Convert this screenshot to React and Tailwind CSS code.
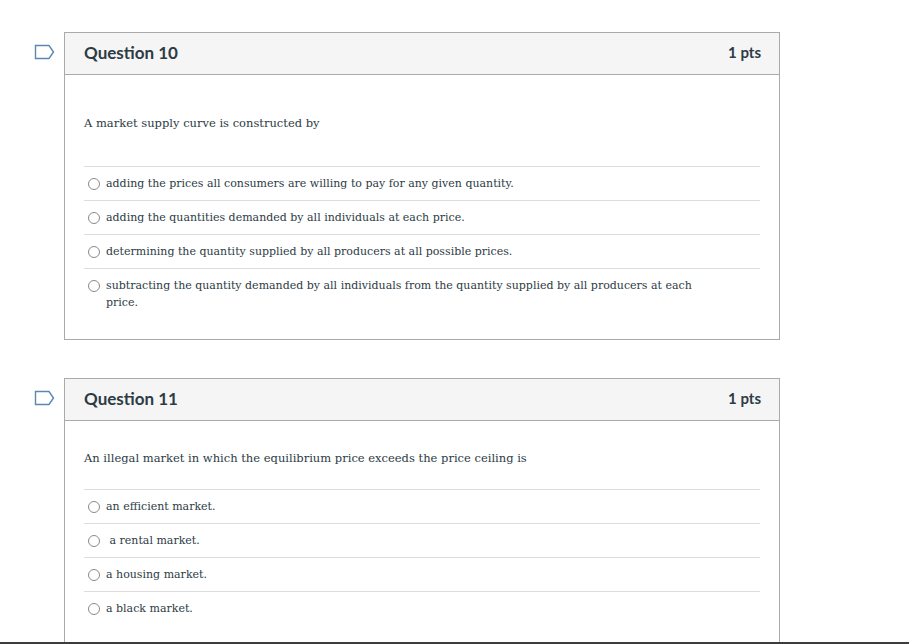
const questions = [
  {
    id: 10,
    points: '1 pts',
    text: 'A market supply curve is constructed by',
    top: 'pt-[39px]',
    gap: 'pb-[34px]',
    answers: [
      'adding the prices all consumers are willing to pay for any given quantity.',
      'adding the quantities demanded by all individuals at each price.',
      'determining the quantity supplied by all producers at all possible prices.',
      'subtracting the quantity demanded by all individuals from the quantity supplied by all producers at each price.',
    ],
  },
  {
    id: 11,
    points: '1 pts',
    text: 'An illegal market in which the equilibrium price exceeds the price ceiling is',
    top: 'pt-[28px]',
    gap: 'pb-[22px]',
    answers: ['an efficient market.', '\u00a0a rental market.', 'a housing market.', 'a black market.'],
  },
];

function Flag() {
  return (
    <svg width="22" height="16" viewBox="0 0 22 16" className="mt-[12px] shrink-0">
      <path d="M1.5 1.5 H15 L19.5 8 L15 14.5 H1.5 Z" fill="none" stroke="#5b88b0" strokeWidth="1.4" />
    </svg>
  );
}

function Question({ q }) {
  return (
    <div className="flex items-start gap-[4px]">
      <div className="w-[60px] flex justify-end pr-[4px]">
        <Flag />
      </div>
      <div className="w-[716px] border border-[#aaaaaa] bg-white">
        <div className="h-[42px] flex items-center justify-between pl-[19px] pr-[18px] bg-[#f5f5f5] border-b border-[#aaaaaa] text-[#2d3b45] font-bold text-[17px] font-['Lato',sans-serif]">
          <span className="-mt-[2px]">Question {q.id}</span>
          <span className="-mt-[2px] text-[15px]">{q.points}</span>
        </div>
        <div className={`px-[19px] pb-[21px] text-[#2d3b45] font-['DejaVu_Serif',serif] ${q.top}`}>
          <p className={`text-[11.5px] leading-[18px] ${q.gap}`}>{q.text}</p>
          <div>
            {q.answers.map((a, i) => (
              <div key={i} className="flex items-start border-t border-[#dddddd] pt-[8px] pb-[7px] min-h-[34px]">
                <span className="mt-[3px] ml-[4px] mr-[6px] w-[12px] h-[12px] shrink-0 rounded-full border border-[#8a8a8a] bg-white" />
                <span className="text-[11px] leading-[17px] pr-[40px]">{a}</span>
              </div>
            ))}
          </div>
        </div>
      </div>
    </div>
  );
}

export default function App() {
  return (
    <div className="h-[644px] overflow-hidden bg-white border-b-2 border-[#3c3c3c]">
      <div className="pt-[32px] flex flex-col gap-[38px]">
        {questions.map((q) => (
          <Question key={q.id} q={q} />
        ))}
      </div>
    </div>
  );
}
